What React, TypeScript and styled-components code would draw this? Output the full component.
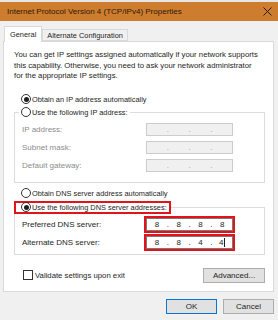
import React from 'react';
import styled, { createGlobalStyle } from 'styled-components';

const GlobalStyle = createGlobalStyle`
  html, body {
    margin: 0;
    padding: 0;
    background: #f0f0f0;
  }
  body {
    font-family: 'Liberation Sans', Arial, sans-serif;
    font-size: 8px;
    color: #1e1e1e;
  }
  * {
    box-sizing: border-box;
  }
`;

const Window = styled.div`
  width: 278px;
  height: 320px;
  display: flex;
  flex-direction: column;
  background: #f0f0f0;
  border-top: 2px solid #e6e6e6;
  overflow: hidden;
`;

const TitleBar = styled.div`
  height: 19px;
  display: flex;
  align-items: center;
  justify-content: space-between;
  padding: 0 6px 0 7px;
  background: #ce7c2e;
  color: #2a1a0c;
  font-size: 8px;
`;

const CloseButton = styled.span`
  display: flex;
  align-items: center;
`;

const Body = styled.div`
  display: flex;
  flex-direction: column;
  padding: 5px 4px 0 3px;
`;

const TabStrip = styled.div`
  display: flex;
  align-items: flex-end;
  height: 15px;
  padding-left: 1px;
  position: relative;
  z-index: 1;
`;

const Tab = styled.div<{ $active?: boolean }>`
  display: flex;
  align-items: center;
  padding: 0 ${({ $active }) => ($active ? '5px' : '4px')};
  height: ${({ $active }) => ($active ? '16px' : '12px')};
  margin-bottom: ${({ $active }) => ($active ? '-1px' : '0')};
  background: ${({ $active }) => ($active ? '#ffffff' : '#f0f0f0')};
  border: 1px solid #d9d9d9;
  border-bottom: ${({ $active }) => ($active ? 'none' : '1px solid #d9d9d9')};
  font-size: 7.4px;
`;

const Panel = styled.div`
  height: 251px;
  background: #ffffff;
  border: 1px solid #d9d9d9;
  padding: 8px 9px 0 10px;
  display: flex;
  flex-direction: column;
`;

const Intro = styled.p`
  margin: 0;
  line-height: 10.5px;
  font-size: 7.75px;
  white-space: nowrap;
`;

const Radio = styled.label<{ $flagged?: boolean }>`
  display: flex;
  align-items: center;
  gap: 1px;
  height: 13px;
  padding: 0 2px 0 ${({ $flagged }) => ($flagged ? '5px' : '2px')};
  border: ${({ $flagged }) => ($flagged ? '2px solid #e3131b' : 'none')};
  background: #ffffff;
  font-size: 7.4px;
  white-space: nowrap;
`;

const RadioDot = styled.span<{ $checked?: boolean }>`
  width: 10px;
  height: 10px;
  border-radius: 50%;
  border: 1px solid #333333;
  display: flex;
  align-items: center;
  justify-content: center;
  &::after {
    content: '';
    width: 5px;
    height: 5px;
    border-radius: 50%;
    background: ${({ $checked }) => ($checked ? '#1e1e1e' : 'transparent')};
  }
`;

const StandaloneRadio = styled.div<{ $top: number }>`
  margin-top: ${({ $top }) => $top}px;
  padding-left: 5px;
`;

const GroupBox = styled.fieldset<{ $top: number; $pad: number; $bottom: number }>`
  margin: ${({ $top }) => $top}px 0 0 0;
  padding: ${({ $pad }) => $pad}px 7px ${({ $bottom }) => $bottom}px 7px;
  border: 1px solid #dcdcdc;
  min-width: 0;
  width: 251px;
`;

const GroupLegend = styled.legend<{ $flagged?: boolean }>`
  padding: 0;
  margin-left: ${({ $flagged }) => ($flagged ? '-8px' : '-3px')};
`;

const FieldRow = styled.div<{ $disabled?: boolean }>`
  display: flex;
  align-items: center;
  justify-content: space-between;
  height: 13px;
  margin-top: 5px;
  color: ${({ $disabled }) => ($disabled ? '#8c8c8c' : '#1e1e1e')};
  &:first-of-type {
    margin-top: 0;
  }
`;

const IpBox = styled.div<{ $disabled?: boolean; $flagged?: boolean }>`
  width: 87px;
  height: 13px;
  margin-right: 24px;
  display: grid;
  grid-template-columns: 1fr 2px 1fr 2px 1fr 2px 1fr;
  align-items: center;
  text-align: center;
  background: ${({ $disabled }) => ($disabled ? '#f0f0f0' : '#ffffff')};
  border: 1px solid ${({ $disabled }) => ($disabled ? '#cccccc' : '#7a7a7a')};
  outline: ${({ $flagged }) => ($flagged ? '2px solid #e3131b' : 'none')};
  outline-offset: 0;
  color: #1e1e1e;
  font-size: 8px;
`;

const Octet = styled.span`
  display: flex;
  justify-content: center;
  align-items: center;
`;

const Dot = styled.span<{ $disabled?: boolean }>`
  color: ${({ $disabled }) => ($disabled ? '#9a9a9a' : '#1e1e1e')};
`;

const Caret = styled.span`
  display: inline-block;
  width: 1px;
  height: 9px;
  margin-left: 1px;
  background: #1e1e1e;
`;

const BottomRow = styled.div`
  display: flex;
  align-items: center;
  justify-content: space-between;
  margin-top: 13px;
  padding: 0 0 0 9px;
  width: 251px;
`;

const CheckLabel = styled.label`
  display: flex;
  align-items: center;
  gap: 2px;
  font-size: 7.75px;
`;

const CheckBox = styled.span`
  width: 10px;
  height: 10px;
  border: 1px solid #333333;
  background: #ffffff;
`;

const Button = styled.button<{ $primary?: boolean; $width: number }>`
  width: ${({ $width }) => $width}px;
  height: 15px;
  padding: 0;
  background: #e1e1e1;
  border: 1px solid ${({ $primary }) => ($primary ? '#0078d7' : '#adadad')};
  font-family: inherit;
  font-size: 8px;
  color: #1e1e1e;
`;

const Footer = styled.div`
  display: flex;
  justify-content: flex-end;
  gap: 6px;
  padding: 7px 0 0 0;
`;

const IpField = ({
  value,
  disabled,
  flagged,
  caret,
}: {
  value?: string[];
  disabled?: boolean;
  flagged?: boolean;
  caret?: boolean;
}) => {
  const parts = value ?? ['', '', '', ''];
  return (
    <IpBox $disabled={disabled} $flagged={flagged}>
      {parts.map((p, i) => (
        <React.Fragment key={i}>
          {i > 0 && <Dot $disabled={disabled}>.</Dot>}
          <Octet>
            {p}
            {caret && i === 3 && <Caret />}
          </Octet>
        </React.Fragment>
      ))}
    </IpBox>
  );
};

export default function App() {
  return (
    <>
      <GlobalStyle />
      <Window>
        <TitleBar>
          <span>Internet Protocol Version 4 (TCP/IPv4) Properties</span>
          <CloseButton>
            <svg width="9" height="9" viewBox="0 0 9 9">
              <path d="M0.5 0.5 L8.5 8.5 M8.5 0.5 L0.5 8.5" stroke="#2a1a0c" strokeWidth="1" />
            </svg>
          </CloseButton>
        </TitleBar>
        <Body>
          <TabStrip>
            <Tab $active>General</Tab>
            <Tab>Alternate Configuration</Tab>
          </TabStrip>
          <Panel>
            <Intro>
              You can get IP settings assigned automatically if your network supports
              <br />
              this capability. Otherwise, you need to ask your network administrator
              <br />
              for the appropriate IP settings.
            </Intro>

            <StandaloneRadio $top={11}>
              <Radio>
                <RadioDot $checked />
                Obtain an IP address automatically
              </Radio>
            </StandaloneRadio>

            <GroupBox $top={0} $pad={4} $bottom={10}>
              <GroupLegend>
                <Radio>
                  <RadioDot />
                  Use the following IP address:
                </Radio>
              </GroupLegend>
              <FieldRow $disabled>
                IP address:
                <IpField disabled />
              </FieldRow>
              <FieldRow $disabled>
                Subnet mask:
                <IpField disabled />
              </FieldRow>
              <FieldRow $disabled>
                Default gateway:
                <IpField disabled />
              </FieldRow>
            </GroupBox>

            <StandaloneRadio $top={4}>
              <Radio>
                <RadioDot />
                Obtain DNS server address automatically
              </Radio>
            </StandaloneRadio>

            <GroupBox $top={1} $pad={4} $bottom={5}>
              <GroupLegend $flagged>
                <Radio $flagged>
                  <RadioDot $checked />
                  Use the following DNS server addresses:
                </Radio>
              </GroupLegend>
              <FieldRow>
                Preferred DNS server:
                <IpField flagged value={['8', '8', '8', '8']} />
              </FieldRow>
              <FieldRow>
                Alternate DNS server:
                <IpField flagged caret value={['8', '8', '4', '4']} />
              </FieldRow>
            </GroupBox>

            <BottomRow>
              <CheckLabel>
                <CheckBox />
                Validate settings upon exit
              </CheckLabel>
              <Button $width={62}>Advanced...</Button>
            </BottomRow>
          </Panel>
          <Footer>
            <Button $primary $width={51}>
              OK
            </Button>
            <Button $width={51}>Cancel</Button>
          </Footer>
        </Body>
      </Window>
    </>
  );
}
